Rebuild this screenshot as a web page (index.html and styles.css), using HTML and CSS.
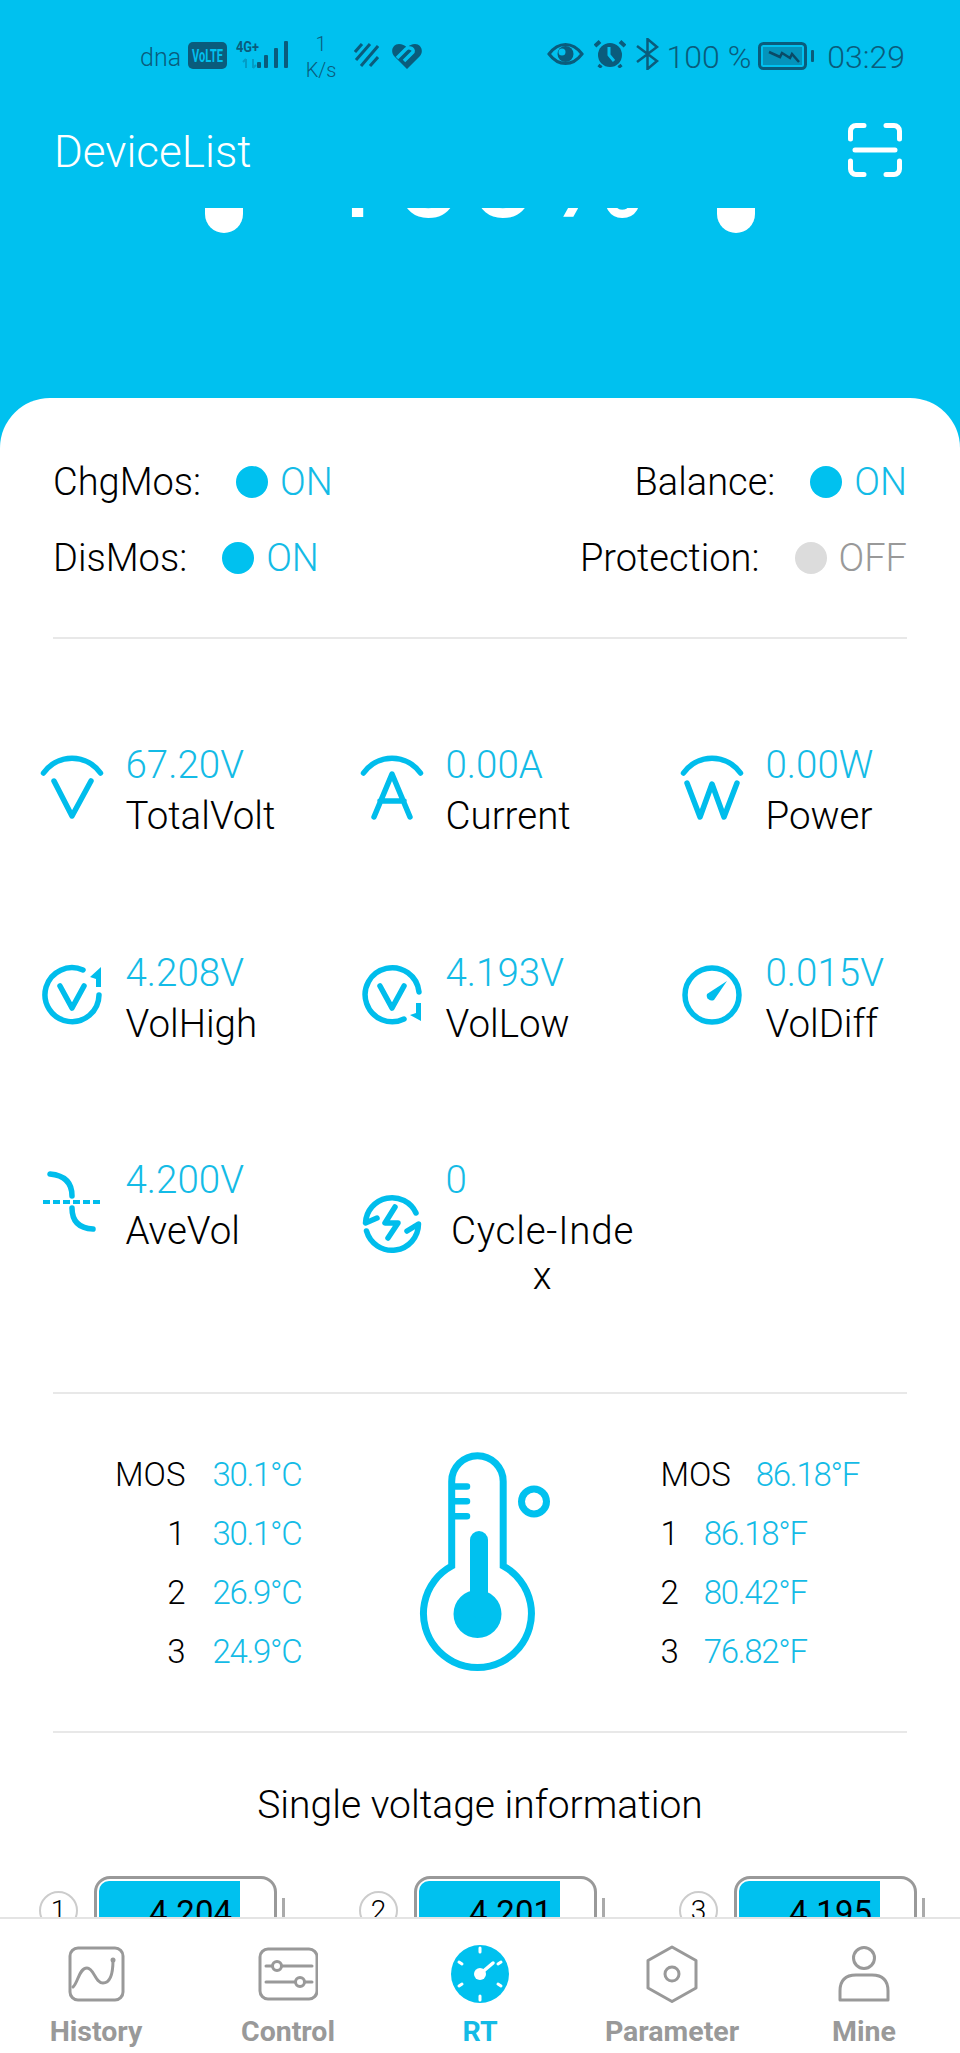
FILE: index.html
```html
<!DOCTYPE html>
<html lang="en">
<head>
<meta charset="utf-8">
<title>DeviceList</title>
<link rel="stylesheet" href="styles.css">
</head>
<body>
<div class="page">
  <header class="topbar">
    <div class="statusbar">
      <div class="status-left">
        <span class="carrier">dna</span>
        <svg class="ic-volte" viewBox="0 0 39 27"><rect width="39" height="27" rx="5" class="sb-fill"/><text x="4" y="20" textLength="31" lengthAdjust="spacingAndGlyphs" class="volte-text">VoLTE</text></svg>
        <svg class="ic-signal" viewBox="0 0 52 30"><text x="0" y="12" textLength="23" lengthAdjust="spacingAndGlyphs" class="g-text">4G+</text><path class="sb-faded" d="M10 28V19M7 22l3-3M17 19v9M17 28l3-3"/><rect x="21" y="22" width="4" height="6" rx="1" class="sb-fill"/><rect x="28" y="15" width="4" height="13" rx="1" class="sb-fill"/><rect x="38" y="8" width="4" height="20" rx="1" class="sb-fill"/><rect x="48" y="1" width="4" height="27" rx="1" class="sb-fill"/></svg>
        <div class="speed"><span>1</span><span>K/s</span></div>
        <svg class="ic-hatch" viewBox="0 0 25 24"><path class="sb-hatch" d="M1 9 8 1M2 17 16 1M7 23 24 3M16 23 24 14"/></svg>
        <svg class="ic-heart" viewBox="0 0 30 26"><path class="sb-fill" d="M15 26 2 13C-2 8 1 1 7 1 10 1 13 2 15 5 17 2 20 1 23 1 29 1 32 8 28 13Z"/><path class="sb-cut" d="M12 18 21 9Q22 6 18 5 16 4 14 6L5 15"/></svg>
      </div>
      <div class="status-right">
        <svg class="ic-eye" viewBox="0 0 37 22"><path class="sb-stroke" d="M2 11C8 3 13 1.500 18.500 1.500S29 3 35 11C29 19 24 20.500 18.500 20.500S8 19 2 11Z"/><circle cx="18.500" cy="11" r="8" class="sb-fill"/><circle cx="15" cy="9" r="3.500" class="sb-hole"/></svg>
        <svg class="ic-alarm" viewBox="0 0 32 28"><path class="sb-line" d="M1 6 6 1.500M31 6 26 1.500M7 25 5 27.500M25 25 27 27.500"/><circle cx="16" cy="15" r="12" class="sb-fill"/><path class="sb-hand" d="M15 7v8l5 6"/></svg>
        <svg class="ic-bt" viewBox="0 0 23 32"><path class="sb-thin" d="M1 8 21 23 11.500 31V1L21 9 1 24"/></svg>
        <span class="battery-pct">100 %</span>
        <svg class="ic-batt" viewBox="0 0 56 28"><rect x="1.500" y="1.500" width="46" height="25" rx="4" class="sb-stroke"/><rect x="5" y="5" width="39" height="18" class="sb-batt"/><path class="sb-bolt" d="M11 10 22 15 24 11 32 16 34 12 41 20"/><rect x="53" y="8" width="3" height="12" rx="1" class="sb-fill"/></svg>
        <span class="clock">03:29</span>
      </div>
    </div>
    <div class="appbar">
      <span class="appbar-title">DeviceList</span>
      <svg class="ic-scan" viewBox="0 0 54 54"><path d="M2.500 16V8a5.500 5.500 0 0 1 5.500-5.500h8M38 2.500h8a5.500 5.500 0 0 1 5.500 5.500v8M2.500 38v8a5.500 5.500 0 0 0 5.500 5.500h8M38 51.500h8a5.500 5.500 0 0 0 5.500-5.500v-8M7 27h40"/></svg>
    </div>
  </header>

  <div class="gauge">
    <span class="drop"></span>
    <span class="gauge-value">100%</span>
    <span class="drop"></span>
  </div>

  <main class="content">
    <section class="flags">
      <div class="flag-row">
        <div class="flag"><span class="flag-label">ChgMos:</span><span class="dot"></span><span class="flag-on">ON</span></div>
        <div class="flag"><span class="flag-label">Balance:</span><span class="dot"></span><span class="flag-on">ON</span></div>
      </div>
      <div class="flag-row">
        <div class="flag"><span class="flag-label">DisMos:</span><span class="dot"></span><span class="flag-on">ON</span></div>
        <div class="flag"><span class="flag-label">Protection:</span><span class="dot dot-off"></span><span class="flag-off">OFF</span></div>
      </div>
    </section>

    <section class="metrics">
      <div class="metric">
        <svg class="metric-icon" viewBox="0 0 64 78"><path d="M3.500 22A35 35 0 0 1 60.500 22M14 30 32 65 51 30"/></svg>
        <div class="metric-text"><div class="metric-value">67.20V</div><div class="metric-label">TotalVolt</div></div>
      </div>
      <div class="metric">
        <svg class="metric-icon" viewBox="0 0 64 78"><path d="M3.500 22A35 35 0 0 1 60.500 22M14 66 32 23 50 66M20 50H44"/></svg>
        <div class="metric-text"><div class="metric-value">0.00A</div><div class="metric-label">Current</div></div>
      </div>
      <div class="metric">
        <svg class="metric-icon" viewBox="0 0 64 78"><path d="M3.500 22A35 35 0 0 1 60.500 22M7 32 20 66 32 33 44 66 57 32"/></svg>
        <div class="metric-text"><div class="metric-value">0.00W</div><div class="metric-label">Power</div></div>
      </div>
      <div class="metric">
        <svg class="metric-icon" viewBox="0 0 64 78"><path d="M43 11A27 27 0 1 0 59 36M20 27 32 49 44 27"/><path class="icon-solid" d="M61 8 50 18 56 20V28H61Z"/></svg>
        <div class="metric-text"><div class="metric-value">4.208V</div><div class="metric-label">VolHigh</div></div>
      </div>
      <div class="metric">
        <svg class="metric-icon" viewBox="0 0 64 78"><path d="M59 33A27 27 0 1 0 44 60M20 27 32 49 44 27"/><path class="icon-solid" d="M61 44V62L50 56 56 54V44Z"/></svg>
        <div class="metric-text"><div class="metric-value">4.193V</div><div class="metric-label">VolLow</div></div>
      </div>
      <div class="metric">
        <svg class="metric-icon" viewBox="0 0 64 78"><circle cx="32" cy="36" r="27"/><path class="icon-solid" d="M47 22 34 41A5 5 0 0 1 27 35Z"/></svg>
        <div class="metric-text"><div class="metric-value">0.015V</div><div class="metric-label">VolDiff</div></div>
      </div>
      <div class="metric">
        <svg class="metric-icon" viewBox="0 0 64 78"><path d="M10 8Q32 10 32 30M32 42Q32 62 53 63"/><path class="icon-dash" d="M3 36H62"/></svg>
        <div class="metric-text"><div class="metric-value">4.200V</div><div class="metric-label">AveVol</div></div>
      </div>
      <div class="metric">
        <svg class="metric-icon" viewBox="0 0 64 78"><path d="M17 31 5.500 36A26.500 26.500 0 0 1 56 26M6.500 44A26.500 26.500 0 0 0 58.500 37L47 44M35 20 25 36H38L28 51"/></svg>
        <div class="metric-text metric-wrap"><div class="metric-value">0</div><div class="metric-label">Cycle-Inde<br>x</div></div>
      </div>
    </section>

    <section class="temps">
      <div class="temp-table temp-left">
        <span class="temp-name">MOS</span><span class="temp-val">30.1°C</span>
        <span class="temp-name">1</span><span class="temp-val">30.1°C</span>
        <span class="temp-name">2</span><span class="temp-val">26.9°C</span>
        <span class="temp-name">3</span><span class="temp-val">24.9°C</span>
      </div>
      <svg class="thermo" viewBox="0 0 200 267">
        <path class="thermo-line" d="M71.700 137V52.400A25.700 25.700 0 0 1 123.200 52.400V137A54 54 0 1 1 71.700 137Z"/>
        <path class="thermo-tick" d="M74 57.500H87M74 72.300H87M74 87.300H87"/>
        <circle class="thermo-fill" cx="97.500" cy="185" r="24"/>
        <path class="thermo-stem" d="M99 111V180"/>
        <circle class="thermo-line" cx="154" cy="72.500" r="12.500"/>
      </svg>
      <div class="temp-right">
        <div class="temp-row"><span class="temp-name">MOS</span><span class="temp-val">86.18°F</span></div>
        <div class="temp-row"><span class="temp-name">1</span><span class="temp-val">86.18°F</span></div>
        <div class="temp-row"><span class="temp-name">2</span><span class="temp-val">80.42°F</span></div>
        <div class="temp-row"><span class="temp-name">3</span><span class="temp-val">76.82°F</span></div>
      </div>
    </section>

    <section class="cells">
      <h2 class="cells-title">Single voltage information</h2>
      <div class="cell-row">
        <div class="cell"><span class="cell-num">1</span><div class="cell-bat"><div class="cell-fill" style="width:81.5%">4.204</div></div><span class="cell-nub"></span></div>
        <div class="cell"><span class="cell-num">2</span><div class="cell-bat"><div class="cell-fill" style="width:81.5%">4.201</div></div><span class="cell-nub"></span></div>
        <div class="cell"><span class="cell-num">3</span><div class="cell-bat"><div class="cell-fill" style="width:81.5%">4.195</div></div><span class="cell-nub"></span></div>
      </div>
    </section>
  </main>

  <nav class="tabbar">
    <div class="tab">
      <svg class="tab-icon" viewBox="0 0 60 60"><rect x="4" y="3" width="53" height="52" rx="8"/><path d="M7 42C12 38 13 23 21 23 28 23 29 38 37 38 44 38 47 28 47 15"/><circle class="tab-solid" cx="47" cy="15" r="2.500"/></svg>
      <span class="tab-label">History</span>
    </div>
    <div class="tab">
      <svg class="tab-icon" viewBox="0 0 60 60"><rect x="2" y="4" width="57" height="50" rx="8"/><path d="M8 21H54M8 37H54"/><circle class="tab-knob" cx="19" cy="21" r="4.500"/><circle class="tab-knob" cx="42" cy="37" r="4.500"/></svg>
      <span class="tab-label">Control</span>
    </div>
    <div class="tab tab-active">
      <svg class="tab-icon" viewBox="0 0 60 60"><circle class="rt-disc" cx="30" cy="29" r="29"/><path class="rt-marks" d="M30 3V7M30 51V55M9 17 12 19M9 41 12 39M51 17 48 19M51 41 48 39"/><path class="rt-needle" d="M30 29 43 18"/><circle class="rt-hub" cx="30" cy="29" r="6"/></svg>
      <span class="tab-label">RT</span>
    </div>
    <div class="tab">
      <svg class="tab-icon" viewBox="0 0 60 60"><path d="M30 2 54 15.500V43L30 56.500 6 43V15.500Z"/><circle cx="30" cy="29" r="7"/></svg>
      <span class="tab-label">Parameter</span>
    </div>
    <div class="tab">
      <svg class="tab-icon" viewBox="0 0 60 60"><circle cx="30" cy="13" r="10.500"/><path d="M6 55V46Q6 30 22 30H38Q54 30 54 46V55Z"/></svg>
      <span class="tab-label">Mine</span>
    </div>
  </nav>
</div>
</body>
</html>
```
FILE: styles.css
```css
* { box-sizing: border-box; }
html, body { margin: 0; padding: 0; }
body { font-family: Roboto, "Noto Sans", sans-serif; font-weight: 300; color: #000; background: #fff; }

.page { width: 960px; height: 2053px; display: flex; flex-direction: column; overflow: hidden; background: #00c1ef; }

/* top bar */
.topbar { height: 208px; flex: none; }
.statusbar { height: 85px; padding: 40px 55px 0 140px; display: flex; justify-content: space-between; color: #0a5c7c; }
.status-left, .status-right { display: flex; align-items: flex-start; }
.carrier { font-size: 25px; line-height: 36px; font-weight: 300; }
.ic-volte { width: 39px; height: 27px; margin: 2px 0 0 7px; }
.volte-text { font-size: 19px; font-weight: 700; fill: #00c1ef; }
.ic-signal { width: 52px; height: 30px; margin: 0 0 0 9px; }
.g-text { font-size: 15px; font-weight: 700; fill: #0a5c7c; }
.sb-fill { fill: #0a5c7c; }
.sb-faded { fill: none; stroke: #0a5c7c; stroke-width: 2; opacity: .35; }
.sb-line { fill: none; stroke: #0a5c7c; stroke-width: 4; }
.sb-hatch { fill: none; stroke: #0a5c7c; stroke-width: 3; }
.sb-cut { fill: none; stroke: #00c1ef; stroke-width: 3.500; }
.sb-stroke { fill: none; stroke: #0a5c7c; stroke-width: 3; }
.sb-thin { fill: none; stroke: #0a5c7c; stroke-width: 2.500; }
.sb-hole { fill: #00c1ef; }
.sb-hand { fill: none; stroke: #00c1ef; stroke-width: 3; }
.sb-batt { fill: #0a5c7c; opacity: .45; }
.sb-bolt { fill: none; stroke: #0a4a66; stroke-width: 2.500; }
.speed { display: flex; flex-direction: column; align-items: center; margin-left: 17px; width: 32px; font-size: 20px; line-height: 26px; margin-top: -9px; }
.ic-hatch { width: 25px; height: 24px; margin: 3px 0 0 17px; }
.ic-heart { width: 30px; height: 26px; margin: 3px 0 0 13px; }
.ic-eye { width: 37px; height: 22px; margin-top: 3px; }
.ic-alarm { width: 32px; height: 28px; margin: 0 0 0 10px; }
.ic-bt { width: 23px; height: 32px; margin: -2px 0 0 10px; }
.battery-pct { font-size: 32px; line-height: 34px; margin-left: 8px; }
.ic-batt { width: 56px; height: 28px; margin: 2px 0 0 7px; }
.clock { font-size: 32px; line-height: 34px; margin-left: 13px; }

.appbar { height: 123px; padding: 0 58px 0 54px; display: flex; align-items: center; justify-content: space-between; }
.appbar-title { font-size: 44px; color: #fff; margin-top: 10px; }
.ic-scan { width: 54px; height: 54px; margin-top: 6px; fill: none; stroke: #fff; stroke-width: 5; stroke-linecap: round; }

/* clipped gauge behind the bar */
.gauge { height: 190px; flex: none; overflow: hidden; padding: 0 205px; display: flex; justify-content: space-between; align-items: flex-start; }
.drop { width: 38px; height: 25px; background: #fff; border-radius: 0 0 19px 19px; }
.gauge-value { font-family: "Noto Sans", sans-serif; font-size: 130px; line-height: 130px; font-weight: 400; color: #fff; margin: -106px 0 0 5px; }

/* white card */
.content { flex: 1; min-height: 0; overflow: hidden; background: #fff; border-radius: 50px 50px 0 0; padding: 0 53px; }

.flags { height: 241px; padding-top: 65px; border-bottom: 2px solid #e8e8e8; display: flex; flex-direction: column; gap: 38px; }
.flag-row { display: flex; justify-content: space-between; height: 38px; }
.flag { display: flex; align-items: center; font-size: 38px; }
.flag-label { margin-right: 35px; }
.dot { width: 32px; height: 32px; border-radius: 50%; background: #00c1ef; margin-right: 12px; }
.dot-off { background: #dcdcdc; }
.flag-on { color: #14bbe6; }
.flag-off { color: #999; }

.metrics { margin: 0 -53px; padding: 100px 0 0 40px; height: 753px; display: grid; grid-template-columns: repeat(3, 320px); grid-auto-rows: auto; row-gap: 105.500px; align-content: start; align-items: start; }
.metric { display: flex; align-items: center; gap: 21.500px; }
.metric-icon { width: 64px; height: 78px; flex: none; fill: none; stroke: #00bdec; stroke-width: 5.500; stroke-linecap: round; stroke-linejoin: round; }
.icon-solid { fill: #00bdec; stroke: none; }
.icon-dash { stroke-width: 4; stroke-dasharray: 7 3; stroke-linecap: butt; }
.metric-value { font-size: 38.500px; line-height: 51px; color: #14bbe6; }
.metric-label { font-size: 38.500px; line-height: 51px; }
.metric-wrap { width: 194px; }
.metric-wrap .metric-label { text-align: center; line-height: 45px; padding-top: 3px; letter-spacing: .8px; }

.temps { height: 341px; border-top: 2px solid #e8e8e8; border-bottom: 2px solid #e8e8e8; padding-left: 62px; display: flex; align-items: center; }
.temp-table { display: grid; grid-template-columns: auto auto; column-gap: 27px; grid-auto-rows: 59px; align-items: center; }
.temp-left .temp-name { text-align: right; }
.temp-name { font-size: 33px; }
.temp-val { font-size: 33px; color: #14bbe6; letter-spacing: -1.300px; }
.thermo { width: 200px; height: 267px; margin: 0 80px 0 79px; flex: none; }
.thermo-line { fill: none; stroke: #00c1ef; stroke-width: 7; }
.thermo-tick { fill: none; stroke: #00c1ef; stroke-width: 6.500; stroke-linecap: round; }
.thermo-fill { fill: #00c1ef; }
.thermo-stem { fill: none; stroke: #00c1ef; stroke-width: 18; stroke-linecap: round; }
.temp-right { display: flex; flex-direction: column; }
.temp-row { display: flex; align-items: center; height: 59px; gap: 25px; }

.cells { margin: 0 -53px; }
.cells-title { margin: 0; height: 143px; padding-top: 47px; font-size: 39px; line-height: 50px; font-weight: 300; text-align: center; }
.cell-row { display: grid; grid-template-columns: repeat(3, 320px); padding-left: 39px; }
.cell { display: flex; align-items: flex-start; height: 100px; }
.cell-num { width: 39px; height: 39px; margin-top: 15px; border: 2px solid #ccc; border-radius: 50%; display: flex; align-items: center; justify-content: center; font-size: 28px; }
.cell-bat { width: 183px; height: 80px; margin-left: 16px; border: 3px solid #999; border-radius: 16px; padding: 2px; }
.cell-fill { height: 70px; background: #00c1ef; border-radius: 10px 0 0 0; font-size: 33px; font-weight: 400; line-height: 60px; padding: 2px 8px 0 0; text-align: right; }
.cell-nub { width: 3px; height: 40px; margin: 22px 0 0 5px; background: #aaa; }

/* tabs */
.tabbar { height: 136px; flex: none; background: #fff; border-top: 2px solid #e4e4e4; display: grid; grid-template-columns: repeat(5, 192px); }
.tab { display: flex; flex-direction: column; align-items: center; padding-top: 26px; }
.tab-icon { width: 60px; height: 60px; flex: none; fill: none; stroke: #999; stroke-width: 3; stroke-linejoin: round; stroke-linecap: round; }
.tab-solid { fill: #999; stroke: none; }
.tab-knob { fill: #fff; }
.tab-label { font-size: 28.500px; line-height: 34px; margin-top: 10px; font-weight: 700; color: #999; }
.tab-active .tab-label { color: #14bbe6; }
.rt-disc { fill: #00c1ef; stroke: none; }
.rt-marks { stroke: #fff; stroke-width: 3; }
.rt-needle { stroke: #fff; stroke-width: 3.500; }
.rt-hub { fill: #fff; stroke: none; }
```
